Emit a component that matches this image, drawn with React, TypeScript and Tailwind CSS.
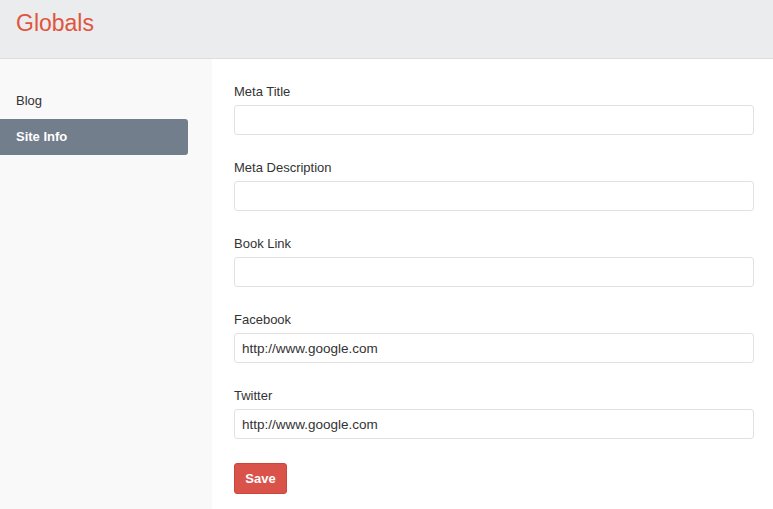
import React from "react"

const fields = [
  { label: "Meta Title", value: "" },
  { label: "Meta Description", value: "" },
  { label: "Book Link", value: "" },
  { label: "Facebook", value: "http://www.google.com" },
  { label: "Twitter", value: "http://www.google.com" },
]

export default function App() {
  return (
    <div className="flex h-[509px] w-[773px] flex-col bg-white font-['Liberation_Sans',Arial,sans-serif] text-[13px] text-[#333]">
      <header className="flex h-[59px] shrink-0 items-center border-b border-[#dcdddf] bg-[#ebeced] px-4 pb-[12px]">
        <h1 className="text-[23px] leading-none text-[#e0553f]">Globals</h1>
      </header>

      <div className="flex flex-1">
        {/* Sidebar */}
        <nav className="w-[212px] shrink-0 bg-[#f9f9f9] pt-[24px]">
          <ul>
            <li className="flex h-9 w-[188px] items-center px-4">Blog</li>
            <li className="flex h-9 w-[188px] items-center rounded-r-[3px] bg-[#737e8c] px-4 font-bold text-white">
              Site Info
            </li>
          </ul>
        </nav>

        {/* Form */}
        <form className="flex-1 pl-[22px] pr-[19px] pt-[24px]">
          {fields.map((f) => (
            <div key={f.label} className="mb-[24px]">
              <label className="mb-[5px] block h-[17px] leading-[18px]">{f.label}</label>
              <input
                type="text"
                defaultValue={f.value}
                className="block h-[30px] w-full rounded-[3px] border border-[#e2e2e2] bg-white px-[7px] text-[13.5px] text-[#333] outline-none"
              />
            </div>
          ))}
          <button
            type="button"
            className="h-[31px] w-[53px] rounded-[3px] border border-[#c9483a] bg-[#d9534a] text-center font-bold text-white"
          >
            Save
          </button>
        </form>
      </div>
    </div>
  )
}
